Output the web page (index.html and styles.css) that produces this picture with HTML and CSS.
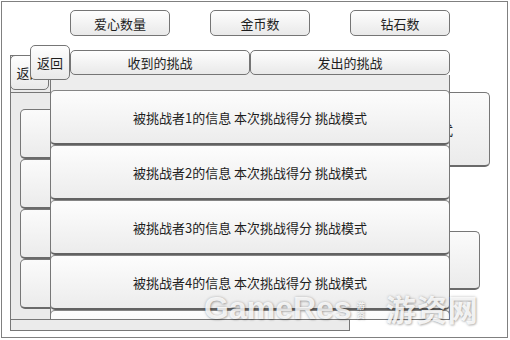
FILE: index.html
```html
<!DOCTYPE html>
<html lang="zh">
<head>
<meta charset="utf-8">
<title>挑战</title>
<link rel="stylesheet" href="styles.css">
</head>
<body>
<div class="frame">
  <div class="topbar">
    <div class="btn top-btn">爱心数量</div>
    <div class="btn top-btn">金币数</div>
    <div class="btn top-btn">钻石数</div>
  </div>

  <div class="layer3-a"><span class="l3-text">本次挑战得分 挑战模式</span></div>
  <div class="layer3-b"></div>

  <div class="back-panel">
    <div class="back-head"><div class="btn back-btn">返回</div></div>
    <div class="back-list">
      <div class="back-item"></div>
      <div class="back-item"></div>
      <div class="back-item"></div>
      <div class="back-item"></div>
    </div>
  </div>

  <div class="front-panel">
    <div class="tabs">
      <div class="btn tab tab1">收到的挑战</div>
      <div class="btn tab tab2">发出的挑战</div>
    </div>
    <div class="front-body">
      <div class="item">被挑战者1的信息 本次挑战得分 挑战模式</div>
      <div class="item">被挑战者2的信息 本次挑战得分 挑战模式</div>
      <div class="item">被挑战者3的信息 本次挑战得分 挑战模式</div>
      <div class="item">被挑战者4的信息 本次挑战得分 挑战模式</div>
      <div class="item"></div>
    </div>
  </div>

  <div class="btn front-back">返回</div>

  <div class="watermark"><span class="wm-en">GameRes</span><span class="wm-small">游<br>资</span><span class="wm-cn">游资网</span></div>
</div>
</body>
</html>
```

FILE: styles.css
```css
* { box-sizing: border-box; }
html, body { margin: 0; padding: 0; background: #fff; }
body {
  font-family: "Noto Sans CJK SC", "Noto Sans", sans-serif;
  color: #222;
}
.frame {
  position: relative;
  margin: 1px;
  width: 507px;
  height: 337px;
  border: 1px solid #808080;
  background: #fff;
  overflow: hidden;
}
.btn {
  display: flex;
  align-items: center;
  justify-content: center;
  border: 1px solid #757575;
  border-radius: 5px;
  background: linear-gradient(#fefefe, #e9e9e9);
  font-size: 13px;
  line-height: 1;
  color: #1e1e1e;
}
.topbar {
  display: flex;
  gap: 40px;
  padding: 8px 0 0 68px;
}
.top-btn { width: 100px; height: 26px; }

.layer3-a {
  position: absolute;
  left: 298px; top: 90px;
  width: 190px; height: 75px;
  border: 1px solid #777;
  border-bottom: 2px solid #6a6a6a;
  border-radius: 5px;
  background: linear-gradient(#fbfbfb, #ebebeb);
  display: flex;
  align-items: center;
  justify-content: flex-end;
  padding-right: 36px;
  font-size: 13px;
}
.layer3-b {
  position: absolute;
  left: 298px; top: 229px;
  width: 180px; height: 59px;
  border: 1px solid #777;
  border-bottom: 2px solid #6a6a6a;
  border-radius: 5px;
  background: linear-gradient(#fbfbfb, #ebebeb);
}

.back-panel {
  position: absolute;
  left: 8px; top: 53px;
  width: 340px; height: 276px;
  border: 1px solid #777;
  background: #ebebeb;
  display: flex;
  flex-direction: column;
}
.back-head {
  height: 37px;
  border-bottom: 1px solid #777;
}
.back-btn {
  width: 39px; height: 35px;
  margin: -1px 0 0 -1px;
}
.back-list {
  display: flex;
  flex-direction: column;
  padding: 16px 0 0 9px;
  height: 227px;
  border-bottom: 1px solid #777;
}
.back-item {
  width: 300px;
  height: 50px;
  border: 1px solid #777;
  border-bottom: 2px solid #6a6a6a;
  border-radius: 5px;
  background: linear-gradient(#fbfbfb, #ebebeb);
}

.front-panel {
  position: absolute;
  left: 48px; top: 48px;
  width: 400px; height: 270px;
  display: flex;
  flex-direction: column;
}
.tabs {
  display: flex;
  padding-left: 20px;
  height: 25px;
}
.tab { height: 25px; }
.tab1 { width: 180px; }
.tab2 { width: 200px; }
.front-body {
  flex: 1;
  border: 1px solid #777;
  border-top: none;
  background: #ededed;
  padding-top: 15px;
  display: flex;
  flex-direction: column;
  overflow: hidden;
}
.item {
  flex: none;
  margin: 0 -1px;
  height: 55px;
  border: 1px solid #858585;
  border-bottom: 2px solid #626262;
  border-radius: 5px;
  background: linear-gradient(#fdfdfd, #ececec);
  display: flex;
  align-items: center;
  justify-content: center;
  font-size: 13px;
  color: #1e1e1e;
}

.front-back {
  position: absolute;
  left: 28px; top: 43px;
  width: 40px; height: 35px;
}

.watermark {
  position: absolute;
  left: 202px; top: 284px;
  display: flex;
  align-items: center;
  gap: 3px;
  color: rgba(255, 255, 255, 0.85);
  text-shadow: 0 0 3px rgba(0, 0, 0, 0.25), 1px 1px 2px rgba(0, 0, 0, 0.2);
  pointer-events: none;
}
.wm-en {
  font-family: "Liberation Sans", Arial, sans-serif;
  font-weight: bold;
  font-size: 32px;
}
.wm-small {
  font-size: 8px;
  line-height: 9px;
  font-weight: bold;
  margin: 4px 18px 0 2px;
}
.wm-cn {
  font-family: "Noto Sans CJK SC", sans-serif;
  font-weight: bold;
  font-size: 30px;
  letter-spacing: 1px;
}
```
